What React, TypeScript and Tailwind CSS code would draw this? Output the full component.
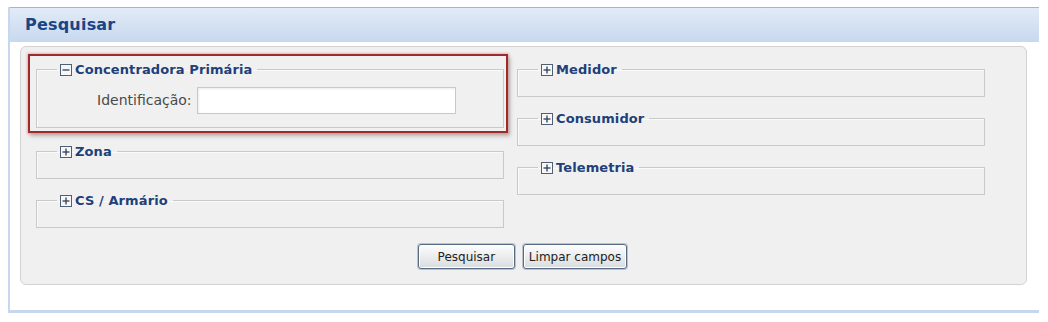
import { FC, ReactNode } from "react"

const font = "font-['DejaVu_Sans',sans-serif]"

const ToggleIcon: FC<{ open: boolean }> = ({ open }) => (
	<svg width="12" height="12" viewBox="0 0 12 12" className="shrink-0">
		<rect x="0.5" y="0.5" width="11" height="11" fill="#f7f7f7" stroke="#4f5f78" />
		<path d="M2.5 6h7" stroke="#2f3f5a" strokeWidth="1.3" />
		{!open && <path d="M6 2.5v7" stroke="#2f3f5a" strokeWidth="1.3" />}
	</svg>
)

type SectionProps = {
	title: string
	open?: boolean
	children?: ReactNode
}

const Section: FC<SectionProps> = ({ title, open = false, children }) => (
	<fieldset className="border border-[#c9c9c9] shadow-[inset_1px_1px_0_#fafafa] px-[20px] min-w-0">
		<legend className="px-[3px] pr-[5px] flex items-center gap-[3px] leading-[15px]">
			<ToggleIcon open={open} />
			<span className="text-[13px] font-bold text-[#213f78] tracking-[0.1px]">{title}</span>
		</legend>
		{open ? children : <div className="h-[19px]" />}
	</fieldset>
)

const Button: FC<{ label: string }> = ({ label }) => (
	<button className="h-[25px] px-[5px] rounded-[3px] border border-[#566a84] bg-gradient-to-b from-[#fdfdfd] to-[#d9dcdf] shadow-[inset_0_0_0_1px_#ffffff,0_0_0_1px_#b8c3d0] text-[12px] text-[#222] min-w-[97px]">
		{label}
	</button>
)

export default function App() {
	return (
		<div className={`w-[1048px] h-[322px] bg-white pt-[7px] pl-[8px] pr-[9px] ${font}`}>
			<div className="h-[306px] flex flex-col border-l-2 border-b-[3px] border-[#c6d7ee]">
				{/* header */}
				<div className="h-[35px] shrink-0 border-t border-[#9ab7dd] bg-gradient-to-b from-[#e2ebf7] to-[#c8d8ee] flex items-center pl-[15px]">
					<h1 className="text-[16px] font-bold text-[#1b4584] tracking-[0.2px]">Pesquisar</h1>
				</div>

				{/* body */}
				<div className="flex-1 bg-white pt-[4px] pl-[10px] pr-[12px]">
					<div className="h-[239px] rounded-[6px] border border-[#d2d2d2] bg-[#f0f0f0] pl-[15px] pt-[15px]">
						<div className="grid grid-cols-[468px_468px] gap-x-[13px] items-start">
							<div className="flex flex-col gap-[14px]">
								<div className="relative mb-[2px]">
									<Section title="Concentradora Primária" open>
										<div className="flex items-center h-[50px] pb-[4px] pl-[40px]">
											<label className="text-[14px] text-[#4a4a4a] mr-[5px]">Identificação:</label>
											<input
												type="text"
												className="w-[259px] h-[27px] bg-white border border-[#c4c8d0] shadow-[inset_1px_1px_2px_rgba(0,0,0,0.08)] outline-none"
											/>
										</div>
									</Section>
									<div className="absolute -left-[8px] -top-[8px] -right-[4px] -bottom-[5px] border-2 border-[#9e2a2a] shadow-[0_0_2px_1px_rgba(220,120,120,0.45),2px_3px_4px_rgba(0,0,0,0.25)] pointer-events-none" />
								</div>
								<Section title="Zona" />
								<Section title="CS / Armário" />
							</div>
							<div className="flex flex-col gap-[14px]">
								<Section title="Medidor" />
								<Section title="Consumidor" />
								<Section title="Telemetria" />
							</div>
						</div>
						<div className="flex justify-center gap-[8px] mt-[16px] pr-[17px]">
							<Button label="Pesquisar" />
							<Button label="Limpar campos" />
						</div>
					</div>
				</div>
			</div>
		</div>
	)
}
